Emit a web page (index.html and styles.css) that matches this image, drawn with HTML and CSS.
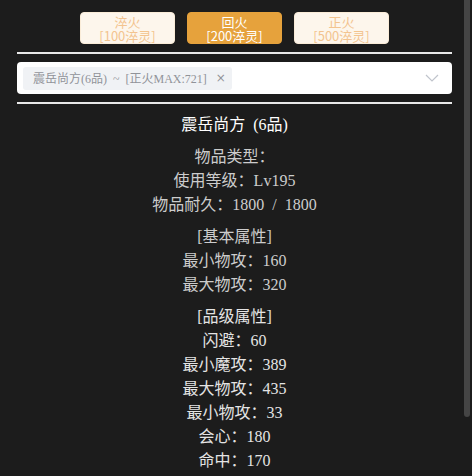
FILE: index.html
```html
<!DOCTYPE html>
<html lang="zh">
<head>
<meta charset="utf-8">
<link rel="stylesheet" href="styles.css">
</head>
<body>
<div class="page">
  <div class="btn-row">
    <div class="btn btn-plain"><span class="btn-line">淬火</span><span class="btn-line">[100淬灵]</span></div>
    <div class="btn btn-active"><span class="btn-line">回火</span><span class="btn-line">[200淬灵]</span></div>
    <div class="btn btn-plain"><span class="btn-line">正火</span><span class="btn-line">[500淬灵]</span></div>
  </div>
  <div class="rule"></div>
  <div class="select">
    <div class="tag">
      <span class="tag-text">震岳尚方(6品) ~ [正火MAX:721]</span>
      <span class="tag-close">×</span>
    </div>
    <svg class="chevron" width="14" height="8" viewBox="0 0 14 8"><path d="M1 1 L7 7 L13 1" fill="none" stroke="#c0c4cc" stroke-width="1.2"/></svg>
  </div>
  <div class="rule"></div>
  <div class="info">
    <div class="title">震岳尚方 (6品)</div>
    <div class="group">
      <div class="line">物品类型：</div>
      <div class="line">使用等级：Lv195</div>
      <div class="line">物品耐久：1800 / 1800</div>
    </div>
    <div class="group">
      <div class="line">[基本属性]</div>
      <div class="line">最小物攻：160</div>
      <div class="line">最大物攻：320</div>
    </div>
    <div class="group bright">
      <div class="line">[品级属性]</div>
      <div class="line">闪避：60</div>
      <div class="line">最小魔攻：389</div>
      <div class="line">最大物攻：435</div>
      <div class="line">最小物攻：33</div>
      <div class="line">会心：180</div>
      <div class="line">命中：170</div>
    </div>
  </div>
</div>
<div class="scroll-thumb"></div>
</body>
</html>
```
FILE: styles.css
```css
html, body {
  margin: 0;
  padding: 0;
  background: #1c1c1c;
  overflow: hidden;
  height: 100%;
}
body {
  font-family: "Liberation Serif", "Noto Sans CJK SC", serif;
}
.page {
  width: 435px;
  margin-left: 17px;
  padding-top: 12px;
}
.btn-row {
  display: flex;
  justify-content: center;
  gap: 12px;
}
.btn {
  width: 95px;
  height: 32px;
  box-sizing: border-box;
  border-radius: 4px;
  font-family: "Noto Sans CJK SC", sans-serif;
  font-size: 13px;
  text-align: center;
  display: flex;
  flex-direction: column;
  align-items: center;
  justify-content: center;
  padding-top: 1px;
}
.btn-line {
  display: block;
  height: 14px;
  line-height: 14px;
}
.btn-plain {
  background: #fdf6ec;
  border: 1px solid #faecd8;
  color: #f3c48f;
}
.btn-active {
  background: #e6a23c;
  border: 1px solid #e6a23c;
  color: #fff;
}
.rule {
  height: 2px;
  background: #e8e8e8;
  margin-top: 8px;
}
.select {
  margin-top: 8px;
  height: 32px;
  background: #fff;
  border-radius: 4px;
  display: flex;
  align-items: center;
  padding: 0 13px 0 6px;
}
.tag {
  height: 23px;
  background: #f0f2f5;
  border-radius: 3px;
  display: flex;
  align-items: center;
  padding: 0 9px 0 10px;
  gap: 9px;
  color: #909399;
  font-size: 12px;
  width: 209px;
  box-sizing: border-box;
}
.tag-text {
  white-space: nowrap;
  word-spacing: 3px;
  font-family: "Liberation Serif", "Noto Sans CJK SC", serif;
}
.tag-close {
  font-family: "DejaVu Sans", sans-serif;
  font-size: 12px;
}
.chevron {
  margin-left: auto;
}
.info {
  text-align: center;
  color: #cccccc;
  font-size: 16px;
  line-height: 24px;
  padding-top: 9px;
  word-spacing: 4px;
}
.title {
  color: #ffffff;
}
.group {
  margin-top: 8px;
}
.bright {
  color: #e4e4e4;
}
.scroll-thumb {
  position: fixed;
  top: 0;
  right: 2px;
  width: 6px;
  height: 417px;
  background: #454545;
  border-radius: 0 0 3px 3px;
}
```
